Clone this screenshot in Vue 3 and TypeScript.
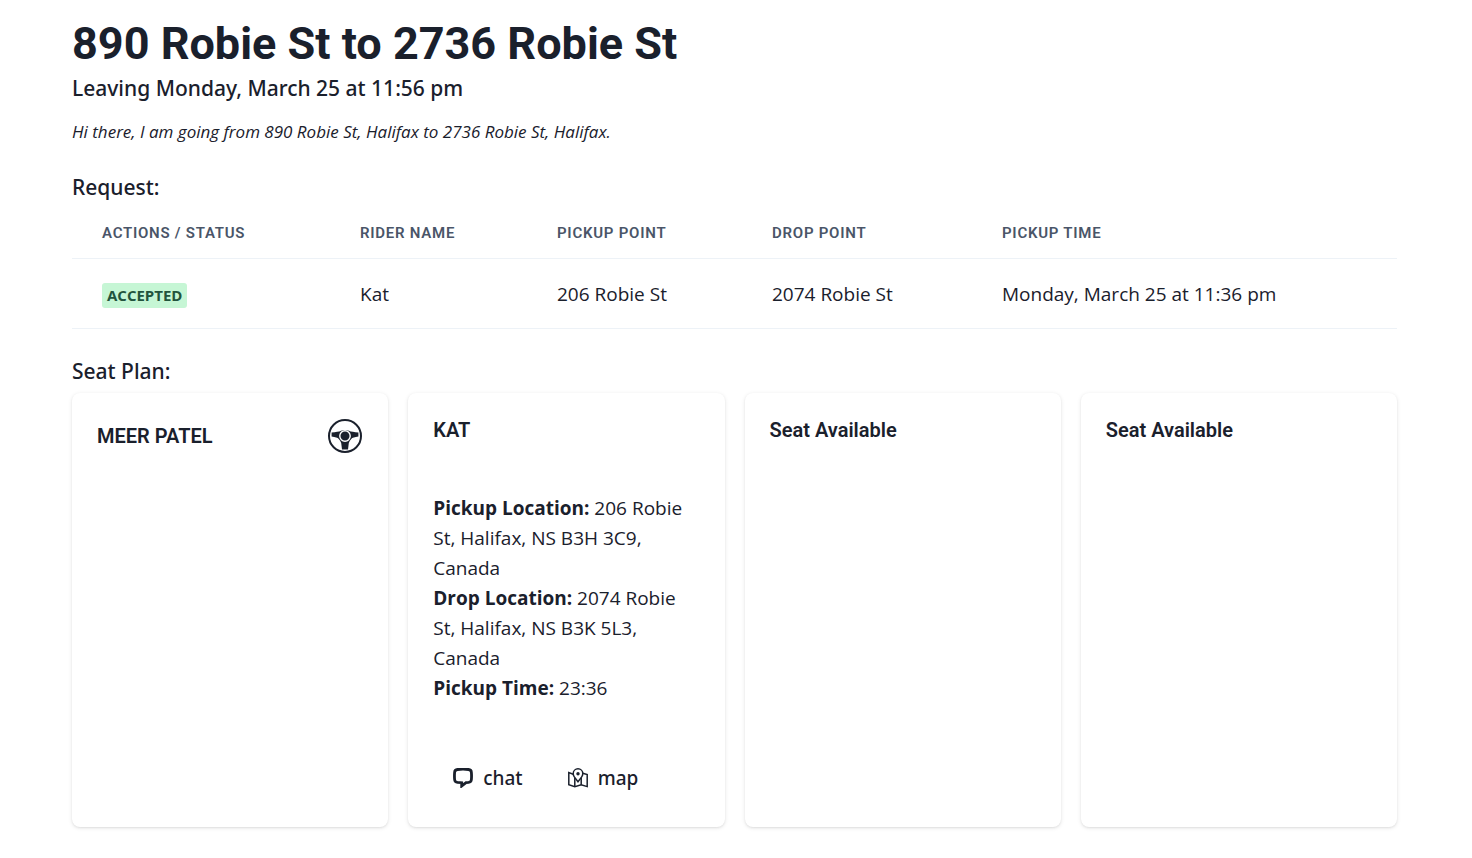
<script setup lang="ts">
interface Ride {
  rider: string
  pickup: string
  drop: string
  time: string
  status: string
}

interface Seat {
  name: string
  kind: 'driver' | 'rider' | 'free'
  details?: { label: string; value: string }[]
}

const columns = ['Actions / Status', 'Rider Name', 'Pickup Point', 'Drop Point', 'Pickup Time']

const requests: Ride[] = [
  {
    status: 'Accepted',
    rider: 'Kat',
    pickup: '206 Robie St',
    drop: '2074 Robie St',
    time: 'Monday, March 25 at 11:36 pm',
  },
]

const seats: Seat[] = [
  { name: 'MEER PATEL', kind: 'driver' },
  {
    name: 'KAT',
    kind: 'rider',
    details: [
      { label: 'Pickup Location:', value: '206 Robie St, Halifax, NS B3H 3C9, Canada' },
      { label: 'Drop Location:', value: '2074 Robie St, Halifax, NS B3K 5L3, Canada' },
      { label: 'Pickup Time:', value: '23:36' },
    ],
  },
  { name: 'Seat Available', kind: 'free' },
  { name: 'Seat Available', kind: 'free' },
]
</script>

<template>
  <main class="page">
    <header>
      <h1>890 Robie St to 2736 Robie St</h1>
      <p class="lead">Leaving Monday, March 25 at 11:56 pm</p>
      <p class="note">Hi there, I am going from 890 Robie St, Halifax to 2736 Robie St, Halifax.</p>
    </header>

    <section class="requests">
      <h2 class="lead">Request:</h2>
      <table>
        <colgroup>
          <col class="c-status" />
          <col class="c-rider" />
          <col class="c-pickup" />
          <col class="c-drop" />
          <col />
        </colgroup>
        <thead>
          <tr>
            <th v-for="c in columns" :key="c" scope="col">{{ c }}</th>
          </tr>
        </thead>
        <tbody>
          <tr v-for="r in requests" :key="r.rider">
            <td><span class="badge">{{ r.status }}</span></td>
            <td>{{ r.rider }}</td>
            <td>{{ r.pickup }}</td>
            <td>{{ r.drop }}</td>
            <td>{{ r.time }}</td>
          </tr>
        </tbody>
      </table>
    </section>

    <section class="plan">
      <h2 class="lead">Seat Plan:</h2>
      <div class="seats">
        <article v-for="(s, i) in seats" :key="i" class="card">
          <div class="card-head">
            <h3>{{ s.name }}</h3>
            <svg v-if="s.kind === 'driver'" class="wheel" viewBox="0 0 36 36" aria-hidden="true">
              <circle cx="18" cy="18" r="16" fill="none" stroke="currentColor" stroke-width="2" />
              <path
                d="M4.6 14.4 Q11 14.2 14 12.8 Q18 11.2 22 12.8 Q25 14.2 31.4 14.4 V18.6 Q25.8 19.2 24.2 21 Q22.4 22.8 21.8 25 L21 31.6 H15 L14.2 25 Q13.6 22.8 11.8 21 Q10.2 19.2 4.6 18.6 Z"
                fill="currentColor"
              />
              <circle cx="18" cy="18" r="5.2" fill="currentColor" stroke="#fff" stroke-width="1.4" />
            </svg>
          </div>
          <template v-if="s.details">
            <div class="card-body">
              <p v-for="d in s.details" :key="d.label"><strong>{{ d.label }}</strong> {{ d.value }}</p>
            </div>
            <div class="card-foot">
              <button type="button">
                <svg viewBox="0 0 20 20" aria-hidden="true">
                  <path
                    d="M4.5 1.5 Q10 .9 15.5 1.5 Q18.3 1.8 18.4 4.5 Q18.7 8 18.4 11.5 Q18.2 14.1 15.5 14.4 L13 14.6 L8.7 18 V14.7 L4.5 14.4 Q1.8 14.1 1.6 11.5 Q1.3 8 1.6 4.5 Q1.7 1.8 4.5 1.5 Z"
                    fill="none"
                    stroke="currentColor"
                    stroke-width="2.8"
                  />
                </svg>
                chat
              </button>
              <button type="button">
                <svg viewBox="0 0 20 20" aria-hidden="true">
                  <g fill="none" stroke="currentColor" stroke-width="1.5">
                    <path d="M5.2 6.2 L.8 4.6 V16.8 L6.8 18.6 L13.2 16.8 L19.2 18.6 V6.6 L14.8 5.2" />
                    <path d="M6.8 10 V18.6 M13.2 10 V16.8" />
                    <path d="M10 13.8 L6.3 8.9 Q5.2 7.4 5.2 5.6 A4.8 4.8 0 0 1 14.8 5.6 Q14.8 7.4 13.7 8.9 Z" />
                  </g>
                  <circle cx="10" cy="5.8" r="1.7" fill="currentColor" />
                </svg>
                map
              </button>
            </div>
          </template>
        </article>
      </div>
    </section>
  </main>
</template>

<style>
body {
  margin: 0;
  background: #fff;
}
</style>

<style scoped>
.page {
  padding: 17px 75px 30px 72px;
  color: #1a202c;
  font-family: 'Open Sans', 'Noto Sans', sans-serif;
  font-size: 19px;
  font-weight: 400;
  line-height: 30px;
}

h1,
h2,
h3,
p {
  margin: 0;
}

h1 {
  font-family: Roboto, sans-serif;
  font-size: 45px;
  font-weight: 700;
  line-height: 54px;
}

.lead {
  font-family: 'Noto Sans', 'Open Sans', sans-serif;
  font-size: 21px;
  font-weight: 500;
  line-height: 34px;
}

.note {
  margin-top: 13px;
  font-size: 17px;
  font-style: italic;
  line-height: 27px;
}

.requests,
.plan {
  margin-top: 25px;
}

table {
  width: 100%;
  margin-top: 4px;
  border-collapse: collapse;
  table-layout: fixed;
}

.c-status {
  width: 258px;
}

.c-rider {
  width: 197px;
}

.c-pickup {
  width: 215px;
}

.c-drop {
  width: 230px;
}

th,
td {
  padding: 20px 30px 19px;
  border-bottom: 1px solid #edf2f7;
  text-align: left;
  white-space: nowrap;
}

th {
  padding: 15px 30px;
  color: #4a5568;
  font-family: Roboto, sans-serif;
  font-size: 15px;
  font-weight: 600;
  letter-spacing: 0.05em;
  line-height: 20px;
  text-transform: uppercase;
}

.badge {
  display: inline-block;
  padding: 0 5px;
  border-radius: 3px;
  background: #c6f6d5;
  color: #22543d;
  font-size: 15px;
  font-weight: 700;
  line-height: 25px;
  text-transform: uppercase;
}

.seats {
  display: grid;
  grid-template-columns: repeat(4, minmax(0, 1fr));
  gap: 20px;
  margin-top: 5px;
}

.card {
  padding: 25px;
  border-radius: 8px;
  background: #fff;
  box-shadow: 0 1px 4px rgba(0, 0, 0, 0.1), 0 1px 2px rgba(0, 0, 0, 0.06);
}

.card-head {
  display: flex;
  align-items: center;
  justify-content: space-between;
}

h3 {
  font-family: Roboto, sans-serif;
  font-size: 20px;
  font-weight: 600;
  line-height: 25px;
}

.wheel {
  width: 36px;
  height: 36px;
}

.card-body {
  padding: 50px 0;
}

strong {
  font-weight: 700;
}

.card-foot {
  display: flex;
  gap: 5px;
}

button {
  display: flex;
  align-items: center;
  gap: 10px;
  height: 49px;
  padding: 0 20px;
  border: 0;
  border-radius: 8px;
  background: transparent;
  color: inherit;
  font: 500 19px 'Noto Sans', 'Open Sans', sans-serif;
  cursor: pointer;
}

button svg {
  width: 20px;
  height: 20px;
}
</style>
